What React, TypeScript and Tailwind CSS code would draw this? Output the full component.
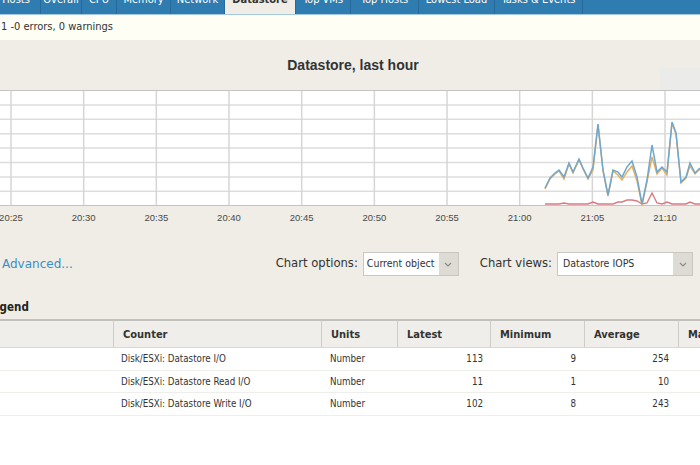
import React from 'react';

const tabs = [
  { label: 'Hosts', cls: 'w-[49px] -ml-[8px]' },
  { label: 'Overall', cls: 'w-[41px]' },
  { label: 'CPU', cls: 'w-[35px]' },
  { label: 'Memory', cls: 'w-[54px]' },
  { label: 'Network', cls: 'w-[54px]' },
  { label: 'Datastore', cls: 'w-[71px]', active: true },
  { label: 'Top VMs', cls: 'w-[55px]' },
  { label: 'Top Hosts', cls: 'w-[68px]' },
  { label: 'Lowest Load', cls: 'w-[76px]' },
  { label: 'Tasks & Events', cls: 'w-[88px]' },
];

// sample points of the last ~10 minutes (x px, total y px, read y px)
const xs = [545, 550, 555, 559, 564, 569, 573, 579, 583, 588, 593, 598, 603, 608, 613, 618, 622, 627, 632, 637, 642, 647, 652, 657, 662, 667, 672, 676, 681, 686, 690, 695, 700];
const total = [188, 178, 173, 170, 177, 163, 172, 159, 168, 178, 167, 124, 170, 195, 170, 172, 177, 167, 161, 177, 204, 180, 145, 172, 167, 172, 122, 133, 182, 177, 163, 173, 168];
const read = [204, 204, 204, 204, 203, 204, 204, 204, 204, 204, 202, 204, 204, 204, 204, 202, 202, 200, 200, 201, 204, 203, 193, 203, 204, 202, 204, 204, 204, 204, 202, 204, 204];

const pts = (ys: number[]) => xs.map((x, i) => `${x},${ys[i] - 90}`).join(' ');
const write = total.map((y, i) => Math.min(205, y + (204 - read[i]) + 1));

const times = ['20:25', '20:30', '20:35', '20:40', '20:45', '20:50', '20:55', '21:00', '21:05', '21:10'];

const rows = [
  { counter: 'Disk/ESXi: Datastore I/O', latest: '113', min: '9', avg: '254' },
  { counter: 'Disk/ESXi: Datastore Read I/O', latest: '11', min: '1', avg: '10' },
  { counter: 'Disk/ESXi: Datastore Write I/O', latest: '102', min: '8', avg: '243' },
];

const Chevron = () => (
  <svg width="8" height="5" viewBox="0 0 8 5" fill="none">
    <path d="M1 1l3 3 3-3" stroke="#8a8a8a" strokeWidth="1.2" />
  </svg>
);

function Chart() {
  return (
    <svg width="700" height="140" className="block font-['Liberation_Sans',sans-serif]">
      <rect x="0" y="0" width="700" height="116" fill="#ffffff" />
      {[1, 2, 3, 4, 5, 6, 7].map((k) => (
        <line key={k} x1="0" x2="700" y1={0.5 + k * 14.4} y2={0.5 + k * 14.4} stroke="#dddddd" strokeWidth="1.5" />
      ))}
      {times.map((t, k) => (
        <line key={t} x1={11 + k * 72.67} x2={11 + k * 72.67} y1="0" y2="116" stroke="#d6d6d6" strokeWidth="1.5" />
      ))}
      <line x1="0" x2="700" y1="0.5" y2="0.5" stroke="#c4c4c4" />
      <line x1="0" x2="700" y1="115.5" y2="115.5" stroke="#c4c4c4" />
      <polyline points={pts(read)} fill="none" stroke="#dc7a82" strokeWidth="1.4" />
      <polyline points={pts(write)} fill="none" stroke="#e8aa58" strokeWidth="1.4" />
      <polyline points={pts(total)} fill="none" stroke="#6fa8cf" strokeWidth="1.5" />
      {times.map((t, k) => (
        <text key={t} x={11 + k * 72.67} y="131" textAnchor="middle" fontSize="9.5" fill="#4a4a4a">
          {t}
        </text>
      ))}
    </svg>
  );
}

export default function App() {
  return (
    <div className="w-[700px] h-[465px] overflow-hidden bg-white text-[#333] font-['DejaVu_Sans_Condensed','DejaVu_Sans',sans-serif]">
      {/* tab strip, scrolled so only the lower half shows */}
      <div className="flex h-[15px] bg-[#2f7cb0] border-b border-[#a6c9e2] overflow-hidden">
        {tabs.map((t) => (
          <div
            key={t.label}
            className={`${t.cls} shrink-0 border-r border-[#27699a] flex justify-center ${
              t.active ? 'bg-[#efede6] text-[#333] font-bold' : 'text-white'
            }`}
          >
            <span className="-mt-[6px] text-[11px] leading-[12px] whitespace-nowrap">{t.label}</span>
          </div>
        ))}
      </div>

      <div className="h-[25px] bg-[#fefef4] flex items-center pl-[1px] text-[11px]">1 -0 errors, 0 warnings</div>

      <div className="bg-[#efede6]">
        <div className="relative h-[50px] flex items-center justify-center">
          <span className="font-['Liberation_Sans',sans-serif] font-bold text-[14px] text-[#333] pl-[6px]">Datastore, last hour</span>
          <div className="absolute right-0 top-[28px] w-[40px] h-[22px] bg-[#ebebea]" />
        </div>

        <Chart />

        <div className="mt-[22px] h-[24px] flex items-center text-[11.6px] font-['DejaVu_Sans',sans-serif]">
          <span className="pl-[2px] text-[12px] text-[#3b8dc6]">Advanced...</span>
          <div className="ml-auto flex items-center mr-[7px]">
            <span className="text-[#333]">Chart options:</span>
            <div className="ml-[5px] w-[96px] h-[24px] flex border border-[#c9c7c0] bg-white">
              <span className="flex-1 pl-[3px] flex items-center text-[10.5px] font-['DejaVu_Sans_Condensed','DejaVu_Sans',sans-serif] whitespace-nowrap overflow-hidden">Current object</span>
              <span className="w-[19px] bg-[#dddbd4] flex items-center justify-center"><Chevron /></span>
            </div>
            <span className="ml-[21px] text-[#333]">Chart views:</span>
            <div className="ml-[5px] w-[136px] h-[24px] flex border border-[#c9c7c0] bg-white">
              <span className="flex-1 pl-[5px] flex items-center text-[10.5px] font-['DejaVu_Sans_Condensed','DejaVu_Sans',sans-serif] whitespace-nowrap">Datastore IOPS</span>
              <span className="w-[19px] bg-[#dddbd4] flex items-center justify-center"><Chevron /></span>
            </div>
          </div>
        </div>

        <div className="h-[43px] pt-[23px]">
          <span className="block -ml-[14px] text-[11.5px] leading-[16px] font-bold text-[#222]">Legend</span>
        </div>
      </div>

      <div className="w-[800px]">
        <div className="grid grid-cols-[113px_208px_76px_93px_94px_94px_100px] h-[29px] border-t-2 border-b border-t-[#c3c1bb] border-b-[#d9d7d0] bg-[#efeeea] text-[11px] font-bold text-[#333]">
          {['', 'Counter', 'Units', 'Latest', 'Minimum', 'Average', 'Maximum'].map((h, i) => (
            <div key={i} className={`flex items-center pl-[9px] pt-[2px] ${i > 0 ? 'border-l border-[#cfcdc6]' : ''}`}>
              {h}
            </div>
          ))}
        </div>
        {rows.map((r) => (
          <div key={r.counter} className="grid grid-cols-[113px_208px_76px_93px_94px_94px_100px] h-[22.7px] border-b border-[#eeeeea] bg-white text-[9.7px] text-[#333]">
            <div />
            <div className="flex items-center pl-[8px] pt-[1px] whitespace-nowrap">{r.counter}</div>
            <div className="flex items-center pl-[9px] pt-[1px]">Number</div>
            <div className="flex items-center justify-end pr-[7px] pt-[1px]">{r.latest}</div>
            <div className="flex items-center justify-end pr-[8px] pt-[1px]">{r.min}</div>
            <div className="flex items-center justify-end pr-[9px] pt-[1px]">{r.avg}</div>
            <div />
          </div>
        ))}
      </div>
    </div>
  );
}
